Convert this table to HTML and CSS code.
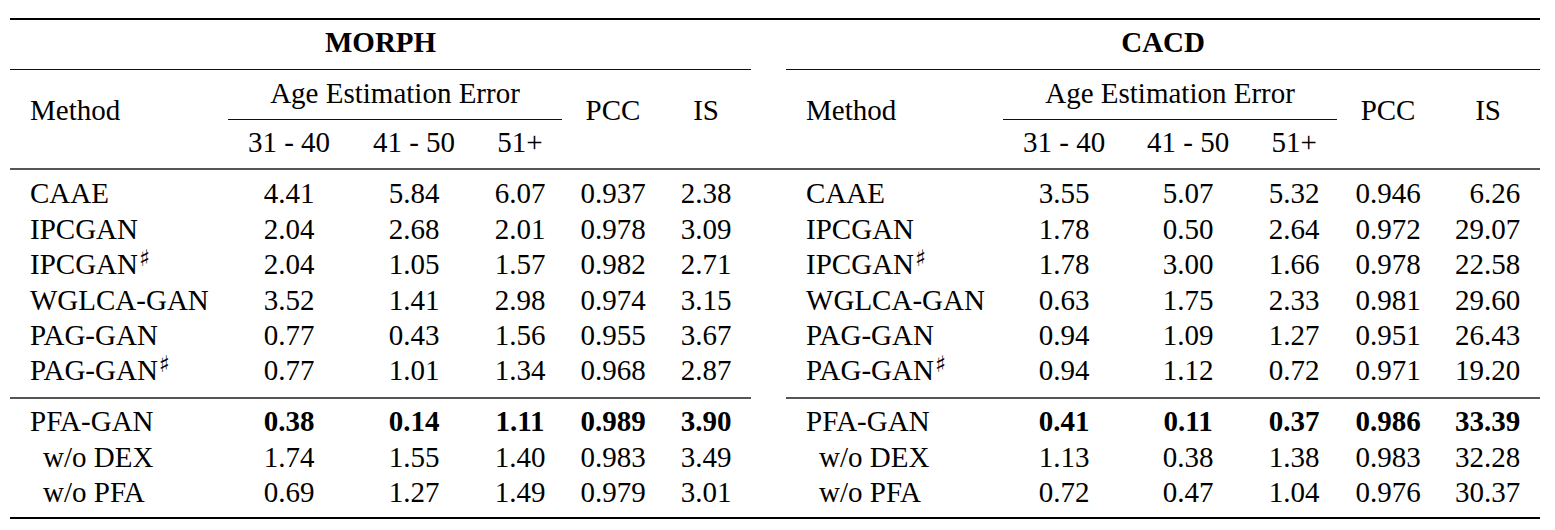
FILE: index.html
```html
<!DOCTYPE html>
<html lang="en">
<head>
<meta charset="utf-8">
<title>MORPH / CACD results</title>
<link rel="stylesheet" href="styles.css">
</head>
<body>
<div class="page">
<table class="results">
  <colgroup>
    <col class="w-method-l"><col class="w-a1"><col class="w-a2-l"><col class="w-a3-l"><col class="w-pcc"><col class="w-is-l">
    <col class="w-gap">
    <col class="w-method-r"><col class="w-a1"><col class="w-a2-r"><col class="w-a3-r"><col class="w-pcc"><col class="w-is-r">
  </colgroup>
  <thead>
    <tr class="r-title">
      <th colspan="6" class="title">MORPH</th>
      <th class="gap"></th>
      <th colspan="6" class="title">CACD</th>
    </tr>
    <tr class="r-group">
      <th rowspan="2" class="span method">Method</th>
      <th colspan="3" class="group"><div class="cmid">Age Estimation Error</div></th>
      <th rowspan="2" class="span">PCC</th>
      <th rowspan="2" class="span">IS</th>
      <th rowspan="2" class="span gap"></th>
      <th rowspan="2" class="span method">Method</th>
      <th colspan="3" class="group"><div class="cmid">Age Estimation Error</div></th>
      <th rowspan="2" class="span">PCC</th>
      <th rowspan="2" class="span">IS</th>
    </tr>
    <tr class="r-sub">
      <th>31 - 40</th><th>41 - 50</th><th>51+</th>
      <th>31 - 40</th><th>41 - 50</th><th>51+</th>
    </tr>
  </thead>
  <tbody class="baselines">
    <tr class="first">
      <td class="method">CAAE</td><td>4.41</td><td>5.84</td><td>6.07</td><td>0.937</td><td>2.38</td>
      <td class="gap"></td>
      <td class="method">CAAE</td><td>3.55</td><td>5.07</td><td>5.32</td><td>0.946</td><td class="is-r">6.26</td>
    </tr>
    <tr>
      <td class="method">IPCGAN</td><td>2.04</td><td>2.68</td><td>2.01</td><td>0.978</td><td>3.09</td>
      <td class="gap"></td>
      <td class="method">IPCGAN</td><td>1.78</td><td>0.50</td><td>2.64</td><td>0.972</td><td class="is-r">29.07</td>
    </tr>
    <tr>
      <td class="method">IPCGAN<sup class="sharp">♯</sup></td><td>2.04</td><td>1.05</td><td>1.57</td><td>0.982</td><td>2.71</td>
      <td class="gap"></td>
      <td class="method">IPCGAN<sup class="sharp">♯</sup></td><td>1.78</td><td>3.00</td><td>1.66</td><td>0.978</td><td class="is-r">22.58</td>
    </tr>
    <tr>
      <td class="method">WGLCA-GAN</td><td>3.52</td><td>1.41</td><td>2.98</td><td>0.974</td><td>3.15</td>
      <td class="gap"></td>
      <td class="method">WGLCA-GAN</td><td>0.63</td><td>1.75</td><td>2.33</td><td>0.981</td><td class="is-r">29.60</td>
    </tr>
    <tr>
      <td class="method">PAG-GAN</td><td>0.77</td><td>0.43</td><td>1.56</td><td>0.955</td><td>3.67</td>
      <td class="gap"></td>
      <td class="method">PAG-GAN</td><td>0.94</td><td>1.09</td><td>1.27</td><td>0.951</td><td class="is-r">26.43</td>
    </tr>
    <tr class="last">
      <td class="method">PAG-GAN<sup class="sharp">♯</sup></td><td>0.77</td><td>1.01</td><td>1.34</td><td>0.968</td><td>2.87</td>
      <td class="gap"></td>
      <td class="method">PAG-GAN<sup class="sharp">♯</sup></td><td>0.94</td><td>1.12</td><td>0.72</td><td>0.971</td><td class="is-r">19.20</td>
    </tr>
  </tbody>
  <tbody class="ours">
    <tr class="first best">
      <td class="method">PFA-GAN</td><td>0.38</td><td>0.14</td><td>1.11</td><td>0.989</td><td>3.90</td>
      <td class="gap"></td>
      <td class="method">PFA-GAN</td><td>0.41</td><td>0.11</td><td>0.37</td><td>0.986</td><td class="is-r">33.39</td>
    </tr>
    <tr>
      <td class="method sub">w/o DEX</td><td>1.74</td><td>1.55</td><td>1.40</td><td>0.983</td><td>3.49</td>
      <td class="gap"></td>
      <td class="method sub">w/o DEX</td><td>1.13</td><td>0.38</td><td>1.38</td><td>0.983</td><td class="is-r">32.28</td>
    </tr>
    <tr class="last">
      <td class="method sub">w/o PFA</td><td>0.69</td><td>1.27</td><td>1.49</td><td>0.979</td><td>3.01</td>
      <td class="gap"></td>
      <td class="method sub">w/o PFA</td><td>0.72</td><td>0.47</td><td>1.04</td><td>0.976</td><td class="is-r">30.37</td>
    </tr>
  </tbody>
</table>
</div>
</body>
</html>
```

FILE: styles.css
```css
html, body {
  margin: 0;
  padding: 0;
  background: #ffffff;
}

body {
  font-family: "Liberation Serif", "Times New Roman", "DejaVu Serif", serif;
  color: #000000;
}

.page {
  padding: 18px 15px 0 10px;
}

.results {
  width: 1530px;
  table-layout: fixed;
  border-collapse: separate;
  border-spacing: 0;
  font-size: 29px;
  line-height: 35.4px;
}

.w-method-l { width: 215px; }
.w-a1 { width: 128px; }
.w-a2-l { width: 122px; }
.w-a3-l { width: 90px; }
.w-pcc { width: 96px; }
.w-is-l { width: 90px; }
.w-gap { width: 35px; }
.w-method-r { width: 214px; }
.w-a2-r { width: 120px; }
.w-a3-r { width: 92px; }
.w-is-r { width: 104px; }

.results th,
.results td {
  padding: 0;
  font-weight: normal;
  text-align: center;
  white-space: nowrap;
}

/* title row: toprule + cmidrules */
.r-title th {
  border-top: 2px solid #000;
  padding: 5px 0 8.6px;
}
.r-title th.title {
  font-weight: bold;
  border-bottom: 1px solid #111;
}

/* group row */
.r-group th.group {
  padding: 5.8px 0 0;
}
.cmid {
  margin: 0 3px;
  padding-bottom: 7.8px;
  border-bottom: 1px solid #111;
}
.r-group th.span {
  vertical-align: middle;
  padding-bottom: 16px;
  border-bottom: 2px solid #555;
}

/* sub header row */
.r-sub th {
  padding: 4.8px 0 7.8px;
  border-bottom: 2px solid #555;
}

.results .method {
  text-align: left;
  padding-left: 20px;
}
.results .method.sub {
  padding-left: 33px;
}

.results td.is-r {
  text-align: right;
  padding-right: 20px;
}

.baselines tr.first td { padding-top: 6.3px; }
.baselines tr.last td { padding-bottom: 7.8px; }
.baselines tr.last td:not(.gap) { border-bottom: 2px solid #555; }

.ours tr.first td { padding-top: 5.6px; }
.ours tr.last td {
  padding-bottom: 6.4px;
  border-bottom: 2px solid #000;
}

.best td:not(.method) { font-weight: bold; }

.sharp {
  font-family: "DejaVu Serif", "DejaVu Sans", serif;
  font-size: 23px;
  line-height: 0;
  vertical-align: 8px;
  margin-left: 1px;
}
```
